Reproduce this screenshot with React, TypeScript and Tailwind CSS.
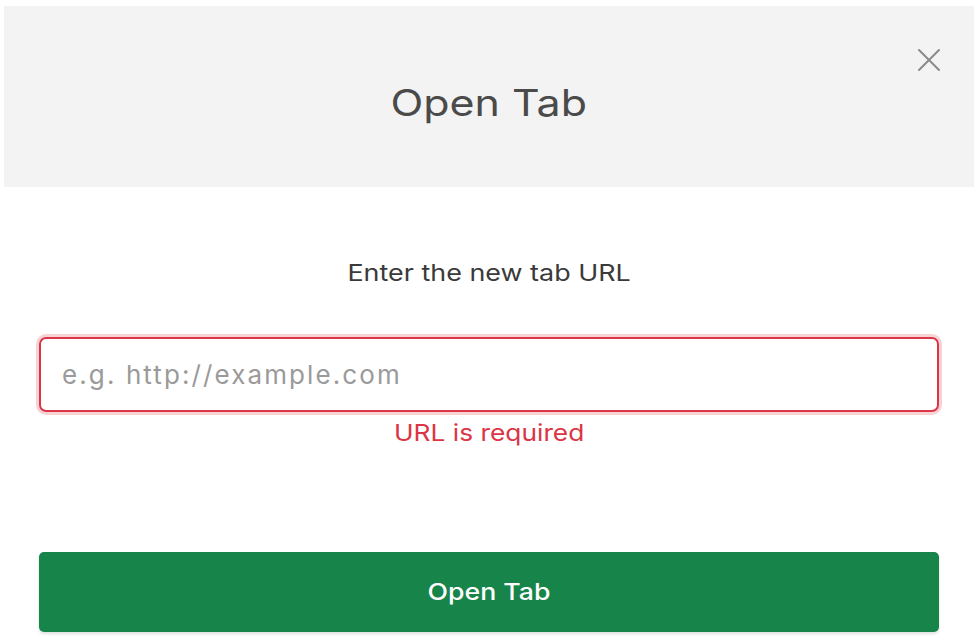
export default function App() {
  return (
    <div className="h-[640px] w-full bg-white pl-[4px] pr-[6px] pt-[6px] font-['Inter',sans-serif]">
      <div className="relative flex h-[181px] items-center justify-center bg-[#f3f3f3] pt-[12px]">
        <h1 className="inline-block scale-x-[1.16] text-[37px] font-normal leading-none text-[#4a4a4a]">Open Tab</h1>
        <button className="absolute right-[33px] top-[42px] text-[#8a8a8a]" aria-label="Close">
          <svg width="24" height="24" viewBox="0 0 24 24" fill="none" stroke="currentColor" strokeWidth="2" strokeLinecap="round">
            <path d="M2 2 L22 22 M22 2 L2 22" />
          </svg>
        </button>
      </div>

      <div className="flex flex-col items-center px-[35px]">
        <p className="mt-[72px] inline-block scale-x-[1.17] text-[23px] leading-[28px] text-[#3a3a3a]">
          Enter the new tab URL
        </p>
        <input
          type="text"
          placeholder="e.g. http://example.com"
          className="mt-[50px] h-[75px] w-full rounded-[7px] border-2 border-[#dc3545] px-[21px] text-[26px] tracking-[2.1px] text-[#333] shadow-[0_0_0_3px_rgba(220,53,69,0.22)] outline-none placeholder:text-[#9a9a9a]"
        />
        <p className="mt-[7px] inline-block scale-x-[1.145] text-[23px] leading-[28px] text-[#dc3545]">URL is required</p>
        <button className="mt-[105px] h-[80px] w-full rounded-[5px] bg-[#17844a] text-white shadow-[0_2px_3px_rgba(0,0,0,0.12)]">
          <span className="inline-block scale-x-[1.16] text-[23px] font-medium">Open Tab</span>
        </button>
      </div>
    </div>
  );
}
